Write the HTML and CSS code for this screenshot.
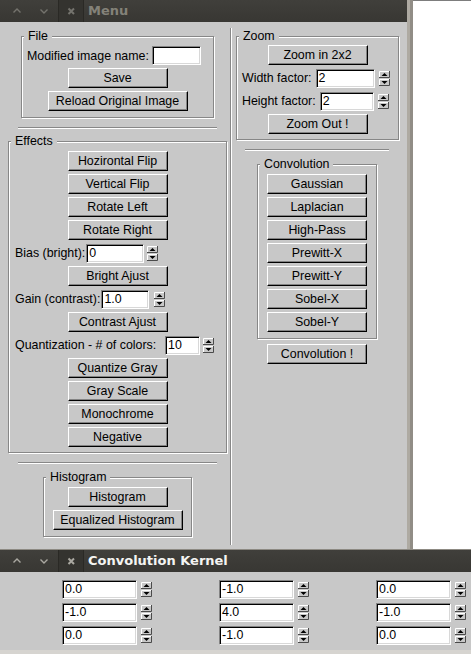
FILE: index.html
```html
<!DOCTYPE html>
<html lang="en">
<head>
<meta charset="utf-8">
<title>Menu</title>
<link rel="stylesheet" href="styles.css">
</head>
<body>
<svg class="defs" width="0" height="0" aria-hidden="true">
  <symbol id="spin" viewBox="0 0 11 15">
    <rect width="11" height="15" fill="#c8c8c8"/>
    <path d="M0.5 6.5V0.5H10" fill="none" stroke="#fff"/>
    <path d="M0 6.5H10.5V0" fill="none" stroke="#4a4a4a"/>
    <path d="M0.5 14.5V8.5H10" fill="none" stroke="#fff"/>
    <path d="M0 14.5H10.5V8" fill="none" stroke="#4a4a4a"/>
    <path d="M5.5 2L8.5 5H2.5Z" fill="#000"/>
    <path d="M2.5 10H8.5L5.5 13Z" fill="#000"/>
  </symbol>
  <symbol id="wm" viewBox="0 0 84 22">
    <rect x="58" y="0" width="25" height="22" fill="#34332f"/>
    <path d="M58.5 0V22M83.5 0V22" stroke="#2a2925"/>
    <path d="M13.5 12.5L17 9L20.5 12.5M40.5 9.5L44 13L47.5 9.5" fill="none" stroke="currentColor" stroke-width="1.4"/>
    <path d="M68.5 8.5L74 14M74 8.5L68.5 14" fill="none" stroke="currentColor" stroke-width="2"/>
  </symbol>
</svg>

<div class="screen">
  <div class="upper">
    <section class="window menu-win">
      <header class="titlebar inactive">
        <svg class="wm" width="84" height="22"><use href="#wm"/></svg>
        <span class="title">Menu</span>
      </header>
      <div class="menu-body">
        <div class="col col-left">
          <div class="frame frame-file">
            <span class="frame-label">File</span>
            <div class="rows">
              <div class="field-row row-name"><span class="lbl">Modified image name:</span><span class="entry e-name"></span></div>
              <button class="btn">Save</button>
              <button class="btn btn-reload">Reload Original Image</button>
            </div>
          </div>
          <div class="hsep sep-left"></div>
          <div class="frame frame-effects">
            <span class="frame-label">Effects</span>
            <div class="rows">
              <button class="btn">Hozirontal Flip</button>
              <button class="btn">Vertical Flip</button>
              <button class="btn">Rotate Left</button>
              <button class="btn">Rotate Right</button>
              <div class="field-row eff-row"><span class="lbl">Bias (bright):</span><span class="entry e-bias">0</span><svg class="spin sp-bias"><use href="#spin"/></svg></div>
              <button class="btn">Bright Ajust</button>
              <div class="field-row eff-row"><span class="lbl">Gain (contrast):</span><span class="entry e-gain">1.0</span><svg class="spin sp-gain"><use href="#spin"/></svg></div>
              <button class="btn">Contrast Ajust</button>
              <div class="field-row eff-row"><span class="lbl lbl-quant">Quantization - # of colors:</span><span class="entry e-quant">10</span><svg class="spin sp-quant"><use href="#spin"/></svg></div>
              <button class="btn">Quantize Gray</button>
              <button class="btn">Gray Scale</button>
              <button class="btn">Monochrome</button>
              <button class="btn">Negative</button>
            </div>
          </div>
          <div class="hsep sep-left"></div>
          <div class="frame frame-hist">
            <span class="frame-label">Histogram</span>
            <div class="rows">
              <button class="btn">Histogram</button>
              <button class="btn btn-eq">Equalized Histogram</button>
            </div>
          </div>
        </div>
        <div class="vsep"></div>
        <div class="col col-right">
          <div class="frame frame-zoom">
            <span class="frame-label">Zoom</span>
            <div class="rows">
              <button class="btn">Zoom in 2x2</button>
              <div class="field-row zoom-row"><span class="lbl">Width factor:</span><span class="entry e-wf">2</span><svg class="spin"><use href="#spin"/></svg></div>
              <div class="field-row zoom-row"><span class="lbl">Height factor:</span><span class="entry e-hf">2</span><svg class="spin"><use href="#spin"/></svg></div>
              <button class="btn">Zoom Out !</button>
            </div>
          </div>
          <div class="hsep sep-right"></div>
          <div class="frame frame-conv">
            <span class="frame-label">Convolution</span>
            <div class="rows">
              <button class="btn">Gaussian</button>
              <button class="btn">Laplacian</button>
              <button class="btn">High-Pass</button>
              <button class="btn">Prewitt-X</button>
              <button class="btn">Prewitt-Y</button>
              <button class="btn">Sobel-X</button>
              <button class="btn">Sobel-Y</button>
            </div>
          </div>
          <button class="btn btn-run">Convolution !</button>
        </div>
      </div>
    </section>
    <div class="win-edge"></div>
    <div class="blank"></div>
  </div>

  <section class="window kernel-win">
    <header class="titlebar active">
      <svg class="wm" width="84" height="22"><use href="#wm"/></svg>
      <span class="title">Convolution Kernel</span>
    </header>
    <div class="kernel-body">
      <div class="kernel-grid">
        <div class="kcell"><span class="entry e-k">0.0</span><svg class="spin"><use href="#spin"/></svg></div>
        <div class="kcell"><span class="entry e-k">-1.0</span><svg class="spin"><use href="#spin"/></svg></div>
        <div class="kcell"><span class="entry e-k">0.0</span><svg class="spin"><use href="#spin"/></svg></div>
        <div class="kcell"><span class="entry e-k">-1.0</span><svg class="spin"><use href="#spin"/></svg></div>
        <div class="kcell"><span class="entry e-k">4.0</span><svg class="spin"><use href="#spin"/></svg></div>
        <div class="kcell"><span class="entry e-k">-1.0</span><svg class="spin"><use href="#spin"/></svg></div>
        <div class="kcell"><span class="entry e-k">0.0</span><svg class="spin"><use href="#spin"/></svg></div>
        <div class="kcell"><span class="entry e-k">-1.0</span><svg class="spin"><use href="#spin"/></svg></div>
        <div class="kcell"><span class="entry e-k">0.0</span><svg class="spin"><use href="#spin"/></svg></div>
      </div>
    </div>
  </section>
</div>
</body>
</html>
```

FILE: styles.css
```css
* { box-sizing: border-box; }
html, body { margin: 0; padding: 0; }
body {
  width: 471px;
  height: 654px;
  overflow: hidden;
  background: #fff;
  font-family: "Liberation Sans", Arial, sans-serif;
  font-size: 12.4px;
  color: #000;
}
.defs { position: absolute; width: 0; height: 0; }

.screen { display: flex; flex-direction: column; height: 654px; }
.upper { display: flex; height: 549px; flex: none; }

.window { background: #c8c8c8; display: flex; flex-direction: column; }
.menu-win { width: 407px; height: 549px; flex: none; }

.titlebar {
  height: 22px;
  flex: none;
  display: flex;
  align-items: center;
  background: linear-gradient(#403f3b, #383733);
}
.wm { display: block; flex: none; }
.titlebar .title {
  padding-left: 4px;
  font-family: "DejaVu Sans", sans-serif;
  font-weight: bold;
  font-size: 13px;
  line-height: 22px;
  white-space: nowrap;
}
.inactive .wm { color: #74736d; }
.inactive .title { color: #848279; }
.active .wm { color: #aaa8a1; }
.active .title { color: #f4f4f2; }

.menu-body { display: flex; flex: 1; }
.col { display: flex; flex-direction: column; align-items: flex-start; }
.col-left { width: 230px; }
.col-right { width: 175px; }
.vsep {
  width: 2px;
  border-left: 1px solid #878787;
  border-right: 1px solid #fff;
  margin: 6px 0 4px;
}
.hsep {
  height: 2px;
  flex: none;
  border-top: 1px solid #878787;
  border-bottom: 1px solid #fff;
}

.frame {
  position: relative;
  flex: none;
  border: 1px solid #878787;
  box-shadow: inset 1px 1px 0 #fff, 1px 1px 0 #fff;
}
.frame-label {
  position: absolute;
  top: -8px;
  left: 2px;
  padding: 0 4px;
  line-height: 15px;
  background: #c8c8c8;
  white-space: nowrap;
}

.rows { display: flex; flex-direction: column; align-items: center; gap: 3px; }

.btn {
  width: 100px;
  height: 20px;
  flex: none;
  margin: 0;
  padding: 0;
  border: 1px solid;
  border-color: #fff #000 #000 #fff;
  box-shadow: inset -1px -1px 0 #838383;
  background: #c8c8c8;
  font: inherit;
  color: #000;
  line-height: 17px;
  text-align: center;
  white-space: nowrap;
}
.btn-reload { width: 140px; }
.btn-eq { width: 130px; }

.field-row {
  align-self: stretch;
  display: flex;
  align-items: center;
  height: 20px;
  flex: none;
}
.lbl { white-space: nowrap; }
.entry {
  display: block;
  flex: none;
  height: 19px;
  padding: 0 0 0 2px;
  background: #fff;
  border: 1px solid;
  border-color: #838383 #fff #fff #838383;
  box-shadow: inset 1px 1px 0 #000, inset -1px -1px 0 #d8d8d8;
  line-height: 17px;
  white-space: nowrap;
}
.spin { display: block; width: 11px; height: 15px; flex: none; }

/* File frame */
.frame-file { margin: 14px 0 0 21px; width: 193px; height: 82px; padding-top: 9px; }
.row-name { height: 19px; padding-left: 5px; gap: 3px; }
.e-name { width: 49px; }

.sep-left { margin: 9px 0 0 18px; width: 199px; }

/* Effects frame */
.frame-effects { margin: 12px 0 0 8px; width: 219px; height: 312px; padding-top: 9px; }
.eff-row { padding-left: 6px; gap: 1px; }
.lbl-quant { width: 149px; }
.e-bias { width: 58px; }
.e-gain { width: 48px; }
.e-quant { width: 35px; }
.sp-bias { margin-left: 2px; }
.sp-gain { margin-left: 4px; }
.sp-quant { margin-left: 2px; }

/* Histogram frame */
.frame-hist { margin: 13px 0 0 43px; width: 149px; height: 60px; padding-top: 9px; }

/* Zoom frame */
.frame-zoom { margin: 14px 0 0 4px; width: 163px; height: 104px; padding-top: 8px; }
.zoom-row { padding: 0 11px 0 5px; gap: 4px; }
.zoom-row .lbl { flex: 1; }
.e-wf { width: 59px; }
.e-hf { width: 54px; }

.sep-right { margin: 9px 0 0 13px; width: 144px; }

/* Convolution frame */
.frame-conv { margin: 13px 0 0 25px; width: 120px; height: 175px; padding-top: 9px; }
.btn-run { margin: 5px 0 0 35px; }

/* right side */
.win-edge {
  width: 6px;
  flex: none;
  background: linear-gradient(to right, #aeaaa2 0 3px, #918d86 3px 6px);
}
.blank {
  flex: 1;
  background: #fff;
  border-top: 1px solid #7d7d7d;
}

/* Kernel window */
.kernel-win { height: 105px; flex: none; }
.kernel-win .titlebar { height: 23px; border-top: 1px solid #8d8a83; }
.kernel-body {
  flex: 1;
  padding: 8px 0 0 62px;
  border-bottom: 4px solid #d6d4d0;
}
.kernel-grid {
  display: grid;
  grid-template-columns: repeat(3, 90px);
  column-gap: 67px;
  row-gap: 4px;
}
.kcell { display: flex; align-items: center; gap: 4px; height: 19px; }
.e-k { width: 75px; }
```
